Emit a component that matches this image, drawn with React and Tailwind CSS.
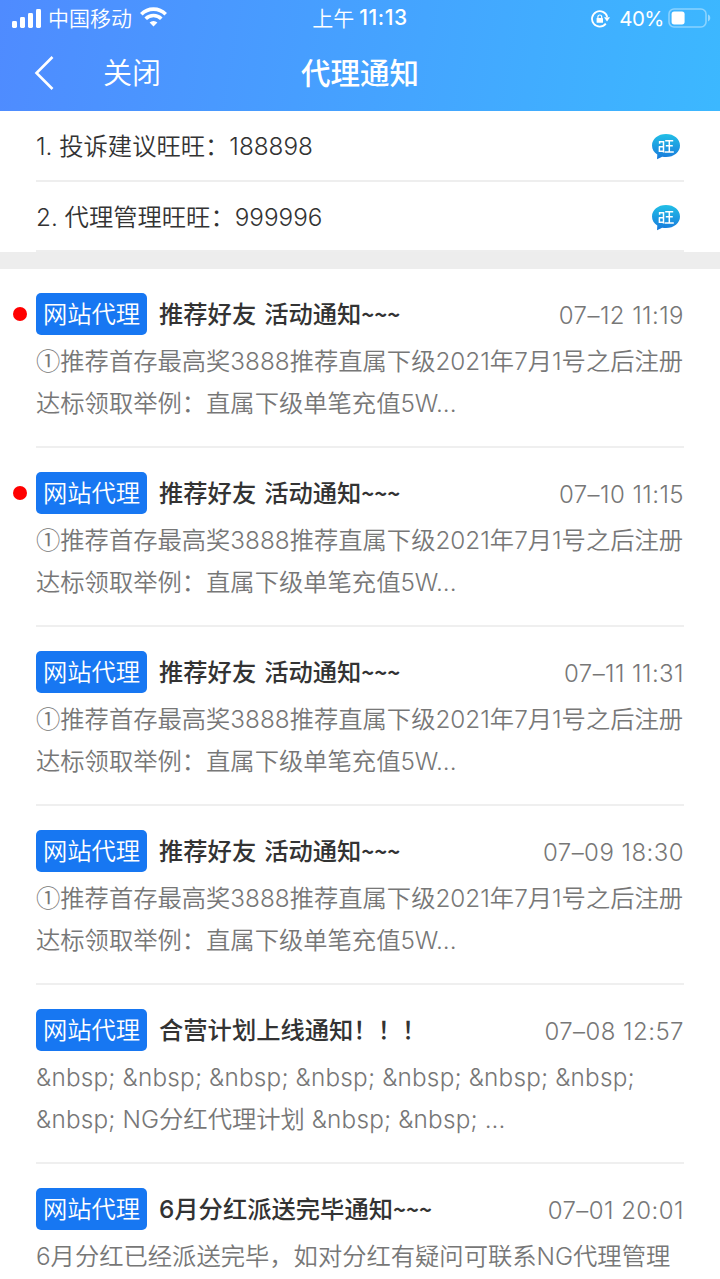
import { clsx } from 'clsx';

const contacts = [
    { id: 1, label: '1. 投诉建议旺旺：188898' },
    { id: 2, label: '2. 代理管理旺旺：999996' },
];

const referral = ['①推荐首存最高奖3888推荐直属下级2021年7月1号之后注册', '达标领取举例：直属下级单笔充值5W...'];

const notices = [
    { id: 1, unread: true, title: '推荐好友 活动通知~~~', date: '07–12 11:19', lines: referral },
    { id: 2, unread: true, title: '推荐好友 活动通知~~~', date: '07–10 11:15', lines: referral },
    { id: 3, unread: false, title: '推荐好友 活动通知~~~', date: '07–11 11:31', lines: referral },
    { id: 4, unread: false, title: '推荐好友 活动通知~~~', date: '07–09 18:30', lines: referral },
    {
        id: 5,
        unread: false,
        title: '合营计划上线通知！！！',
        date: '07–08 12:57',
        lines: [
            '&nbsp; &nbsp; &nbsp; &nbsp; &nbsp; &nbsp; &nbsp;',
            '&nbsp; NG分红代理计划 &nbsp; &nbsp; ...',
        ],
    },
    {
        id: 6,
        unread: false,
        title: '6月分红派送完毕通知~~~',
        date: '07–01 20:01',
        lines: ['6月分红已经派送完毕，如对分红有疑问可联系NG代理管理'],
    },
];

// The circled numeral and the tildes come from the Chinese font, the rest of the Latin text from Inter
function Mixed({ text }) {
    return text.split(/(①|~+|&nbsp;)/).filter(Boolean).map((part, i) => (
        <span
            key={i}
            className={clsx(
                part === '①' && "font-['Noto_Sans_CJK_SC',sans-serif] leading-none",
                part[0] === '~' && "font-['Noto_Sans_CJK_SC',sans-serif] text-[22px] font-bold",
                part[0] === '&' && 'tracking-[0.22px]'
            )}
        >
            {part}
        </span>
    ));
}

function StatusBar() {
    return (
        <div className="grid grid-cols-3 items-center h-9 pl-3 pr-[9px]">
            <div className="flex items-center">
                <svg className="w-[30px] h-[19px] -mt-px" viewBox="0 0 30 19" fill="currentColor">
                    <rect x="0" y="12" width="5" height="7" rx="1.4" />
                    <rect x="8" y="8" width="5" height="11" rx="1.4" />
                    <rect x="16" y="4" width="5" height="15" rx="1.4" />
                    <rect x="24" y="0" width="5" height="19" rx="1.4" />
                </svg>
                <span className="ml-1.5 text-[21px] font-[350] leading-9">中国移动</span>
                <svg className="ml-2 -mt-[3px] w-[27px] h-[20px]" viewBox="0 0 27 20" fill="none" stroke="currentColor" strokeWidth="3.6">
                    <path d="M1.300 7.200a17.300 17.300 0 0 1 24.400 0" />
                    <path d="M5.700 11.800a11 11 0 0 1 15.600 0" />
                    <path d="M13.500 19.600l-3.900-4a5.500 5.500 0 0 1 7.800 0z" fill="currentColor" stroke="none" />
                </svg>
            </div>
            <div className="flex justify-center pr-[3px] text-[21px] font-medium leading-9">
                <span className="pt-px font-[350]">上午</span>
                <span className="ml-[5px] tracking-[0.6px]">11:13</span>
            </div>
            <div className="flex items-center justify-end">
                <svg className="w-[19px] h-[18px]" viewBox="0 0 19 18" fill="none" stroke="currentColor">
                    <path d="M14.800 13.600A7.700 7.700 0 1 1 16.200 7" strokeWidth="1.8" />
                    <path d="M13 7.200h6L16 11.400z" fill="currentColor" stroke="none" />
                    <rect x="5.600" y="8" width="6.400" height="4.800" rx=".6" fill="currentColor" stroke="none" />
                    <path d="M6.900 8.200V6.900a1.900 1.900 0 0 1 3.800 0v1.300" strokeWidth="1.200" />
                </svg>
                <span className="ml-[9px] pt-px text-[20.500px] tracking-[-0.5px] leading-9">40%</span>
                <svg className="ml-1 -mt-px w-[43px] h-[20px]" viewBox="0 0 43 20" fill="none">
                    <rect x="1" y="1" width="37" height="18" rx="5" stroke="white" strokeOpacity=".4" strokeWidth="1.600" />
                    <rect x="3.600" y="3.600" width="13" height="12.800" rx="2.600" fill="white" />
                    <path d="M40 6.600c3 .9 3 5.900 0 6.800z" fill="white" fillOpacity=".45" />
                </svg>
            </div>
        </div>
    );
}

function WangIcon() {
    return (
        <svg className="w-[30px] h-[28px]" viewBox="0 0 30 28">
            <defs>
                <linearGradient id="wang" x1="0" y1="0" x2="0" y2="1">
                    <stop offset="0" stopColor="#22bfe6" />
                    <stop offset="1" stopColor="#1879dc" />
                </linearGradient>
            </defs>
            <path d="M15 1C7 1 1 5.900 1 12.500c0 3.800 2 7 5.300 9.100L6 26.200l5.200-2.500c1.200.2 2.500.3 3.800.3 8 0 14-4.900 14-11.500S23 1 15 1z" fill="url(#wang)" />
            <g fill="none" stroke="white" strokeWidth="1.500">
                <path d="M8.600 10.800V8.700h3.900v10.700M7.800 13.700h4.700M12.500 18.300H8.400v-4.600" />
                <path d="M14.200 7.800h8M14.800 12.800h7M13.600 19h9.200M18.300 7.800V19" />
            </g>
        </svg>
    );
}

function Notice({ notice }) {
    return (
        <li className="h-[179px] shrink-0 border-b-2 border-[#efefef] pt-[24px]">
            <div className="relative flex items-center h-[42px]">
                {notice.unread && <span className="absolute -left-[23px] w-[14px] h-[14px] rounded-full bg-[#ff0000]" />}
                <span className="w-[111px] h-[42px] shrink-0 rounded-[5px] bg-[#1777f2] text-center text-[24.3px] leading-[42px] font-[350] text-white">
                    网站代理
                </span>
                <h2 className="ml-3 text-[24.3px] font-medium text-[#333] [word-spacing:1.5px]">
                    <Mixed text={notice.title} />
                </h2>
                <time className="ml-auto pt-[3px] text-[24px] font-[350] tracking-[0.45px] text-[#777]">{notice.date}</time>
            </div>
            <div className="mt-[5px] text-[24.3px] leading-[42px] font-[350] text-[#777] whitespace-nowrap">
                {notice.lines.map((line, i) => (
                    <p key={i} className="h-[42px]"><Mixed text={line} /></p>
                ))}
            </div>
        </li>
    );
}

export default function App() {
    return (
        <div
            lang="zh-CN"
            className="flex flex-col w-[720px] h-[1279px] overflow-hidden bg-white font-['Inter','Noto_Sans_CJK_SC',sans-serif]"
        >
            <header className="h-[111px] shrink-0 bg-linear-[100deg,#4f8bff,#3cb8ff] text-white">
                <StatusBar />
                <div className="grid grid-cols-3 items-center h-[74px] pl-[34px] pr-[34px]">
                    <div className="flex items-center">
                        <svg className="w-5 h-[34px]" viewBox="0 0 20 34" fill="none" stroke="currentColor" strokeWidth="2.600">
                            <path d="M18.500 1L2.500 17l16 16" />
                        </svg>
                        <span className="ml-[49px] pt-px text-[29px] font-[350]">关闭</span>
                    </div>
                    <h1 className="text-center text-[29.500px] font-medium">代理通知</h1>
                </div>
            </header>

            <ul className="shrink-0 px-9">
                {contacts.map((contact, i) => (
                    <li
                        key={contact.id}
                        className={clsx(
                            'flex items-center justify-between border-b-2 border-[#eee] text-[24.3px] text-[#333]',
                            i === 0 ? 'h-[71px] pt-[2px]' : 'h-[70px] pt-[3px]'
                        )}
                    >
                        <span className="font-[350]"><Mixed text={contact.label} /></span>
                        <span className="mr-[3px] pt-px"><WangIcon /></span>
                    </li>
                ))}
            </ul>

            <div className="h-[17px] shrink-0 bg-[#ededed]" />

            <ul className="flex flex-col px-9">
                {notices.map((notice) => (
                    <Notice key={notice.id} notice={notice} />
                ))}
            </ul>
        </div>
    );
}
